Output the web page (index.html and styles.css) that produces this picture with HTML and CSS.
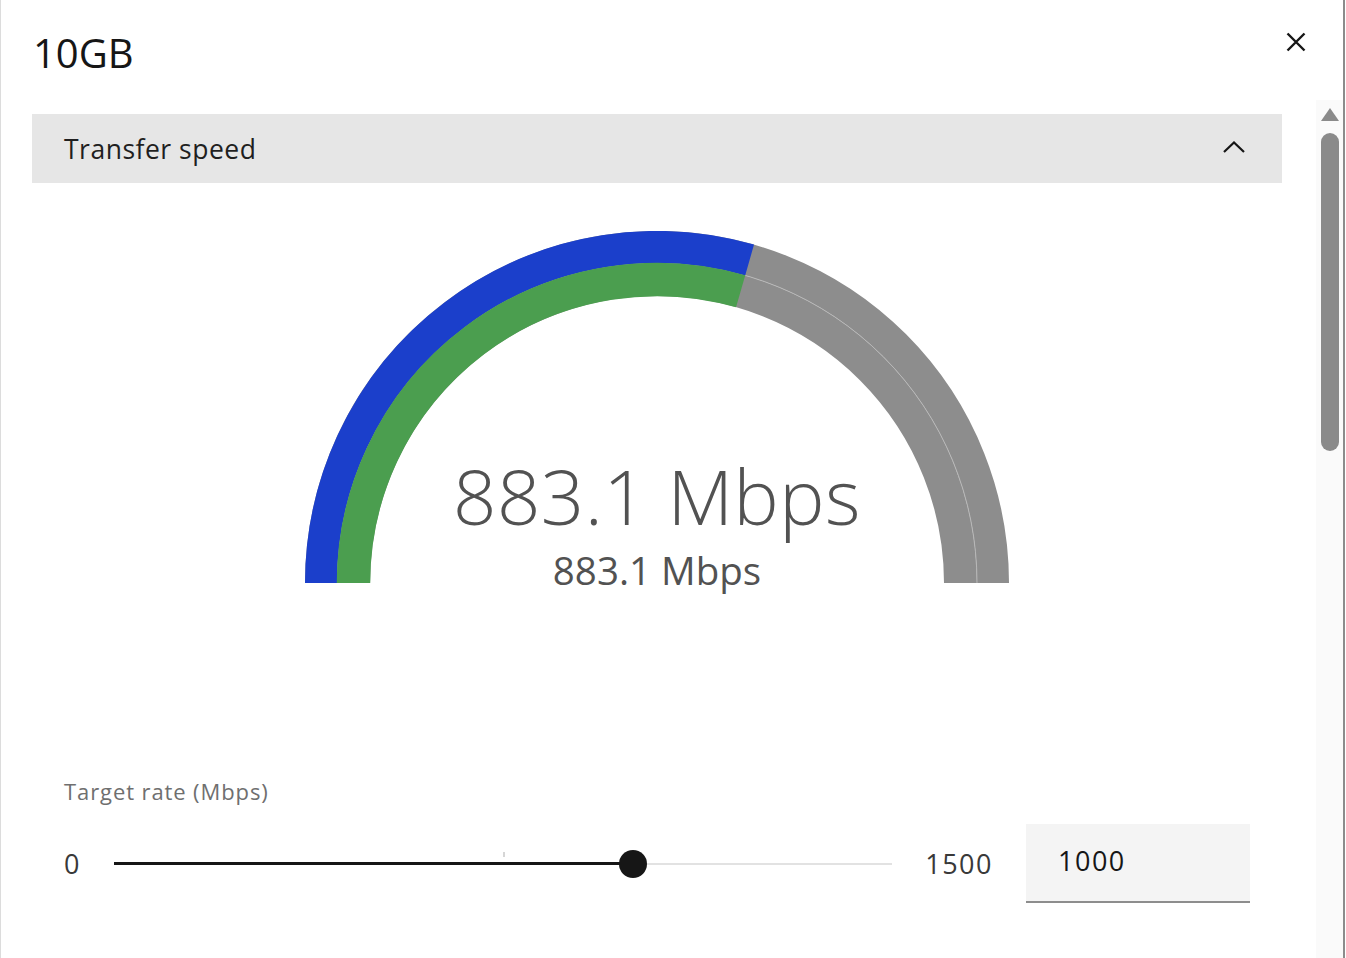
FILE: index.html
```html
<!DOCTYPE html>
<html lang="en">
<head>
<meta charset="utf-8">
<title>10GB</title>
<link rel="stylesheet" href="styles.css">
</head>
<body>
<div class="modal">
  <div class="modal-header">
    <h1 class="title">10GB</h1>
    <button class="close" aria-label="Close">
      <svg width="20" height="20" viewBox="0 0 20 20"><path d="M1.5 1.5 L18.5 18.5 M18.5 1.5 L1.5 18.5" stroke="#161616" stroke-width="2.4" fill="none"/></svg>
    </button>
  </div>
  <div class="modal-body">
    <div class="content">
      <div class="accordion-head">
        <span class="accordion-title">Transfer speed</span>
        <svg class="chevron" width="22" height="12" viewBox="0 0 22 12"><path d="M1 11 L11 1.5 L21 11" stroke="#161616" stroke-width="2.2" fill="none"/></svg>
      </div>
      <div class="gauge">
        <svg class="gauge-svg" width="704" height="360" viewBox="0 0 704 360">
          <path d="M16 352 A336 336 0 0 1 688 352" stroke="#8d8d8d" stroke-width="32" fill="none"/>
          <path d="M48.5 352 A303.5 303.5 0 0 1 655.5 352" stroke="#8d8d8d" stroke-width="33" fill="none"/>
          <path d="M32 352 A320 320 0 0 1 672 352" stroke="#b8b8b8" stroke-width="1" fill="none"/>
          <path d="M16 352 A336 336 0 0 1 444.6 29.0" stroke="#1b3fcb" stroke-width="32" fill="none"/>
          <path d="M48.5 352 A303.5 303.5 0 0 1 435.65 60.25" stroke="#4b9e4f" stroke-width="33.5" fill="none"/>
        </svg>
        <div class="readout">
          <div class="readout-main">883.1 Mbps</div>
          <div class="readout-sub">883.1 Mbps</div>
        </div>
      </div>
      <div class="rate">
        <div class="rate-label">Target rate (Mbps)</div>
        <div class="slider-row">
          <span class="range-label">0</span>
          <div class="slider">
            <div class="track-active" style="width: 66.67%"></div>
            <div class="thumb"></div>
            <div class="track-rest"></div>
            <div class="tick"></div>
          </div>
          <span class="range-label">1500</span>
          <div class="number-input">1000</div>
        </div>
      </div>
    </div>
    <div class="scrollbar">
      <div class="scroll-arrow"></div>
      <div class="scroll-thumb"></div>
    </div>
  </div>
</div>
</body>
</html>
```
FILE: styles.css
```css
* { box-sizing: border-box; }
html, body { margin: 0; padding: 0; background: #ffffff; }
body {
  font-family: "Open Sans", "Noto Sans", sans-serif;
  color: #161616;
  width: 1346px;
  height: 958px;
  overflow: hidden;
}
.modal {
  width: 1345px;
  height: 958px;
  border-left: 1px solid #dcdcdc;
  border-right: 2px solid #8c8c8c;
  display: flex;
  flex-direction: column;
  background: #fff;
}
.modal-header {
  height: 100px;
  display: flex;
  justify-content: space-between;
  align-items: flex-start;
  padding-left: 32px;
  padding-right: 37px;
}
.title {
  margin: 0;
  margin-top: 28px;
  font-size: 40px;
  font-weight: 400;
  line-height: 50px;
  color: #161616;
}
.close {
  border: 0;
  background: none;
  padding: 0;
  margin-top: 32px;
  width: 20px;
  height: 20px;
  display: block;
}
.close svg { display: block; }
.modal-body {
  flex: 1;
  display: flex;
  min-height: 0;
}
.content {
  flex: 1;
  padding-left: 31px;
  padding-right: 34px;
  padding-top: 14px;
}
.accordion-head {
  height: 69px;
  background: #e6e6e6;
  display: flex;
  align-items: center;
  justify-content: space-between;
  padding-left: 32px;
  padding-right: 37px;
}
.accordion-title {
  font-size: 26.5px;
  line-height: 30px;
  letter-spacing: 0.5px;
  color: #1f1f1f;
}
.chevron { display: block; margin-top: -4px; }
.gauge {
  margin-top: 48px;
  display: grid;
  justify-items: center;
}
.gauge-svg { grid-area: 1 / 1; display: block; }
.readout {
  grid-area: 1 / 1;
  align-self: end;
  text-align: center;
  color: #525252;
  margin-bottom: -4px;
}
.readout-main {
  font-size: 76px;
  font-weight: 300;
  line-height: 80px;
  letter-spacing: 0.5px;
}
.readout-sub {
  font-size: 38.5px;
  font-weight: 400;
  line-height: 50px;
  margin-top: 9px;
}
.rate {
  margin-top: 186px;
  padding-left: 32px;
  padding-right: 32px;
}
.rate-label {
  font-size: 22px;
  line-height: 28px;
  letter-spacing: 0.9px;
  color: #6f6f6f;
}
.slider-row {
  margin-top: 19px;
  display: flex;
  align-items: center;
  gap: 33px;
}
.range-label {
  font-size: 27px;
  letter-spacing: 1.5px;
  color: #393939;
  line-height: 30px;
}
.slider {
  flex: 1;
  height: 30px;
  display: flex;
  align-items: center;
  position: relative;
}
.track-active {
  height: 3px;
  background: #161616;
}
.thumb {
  width: 28px;
  height: 28px;
  border-radius: 50%;
  background: #161616;
  margin-left: -14px;
  margin-right: -14px;
  position: relative;
  z-index: 1;
}
.track-rest {
  flex: 1;
  height: 2px;
  background: #e2e2e2;
}
.tick {
  position: absolute;
  left: 50%;
  top: 3px;
  width: 2px;
  height: 5px;
  background: #d6d6d6;
}
.number-input {
  width: 224px;
  height: 79px;
  background: #f4f4f4;
  border-bottom: 2px solid #8d8d8d;
  padding-left: 32px;
  display: flex;
  align-items: center;
  font-size: 27px;
  letter-spacing: 1.5px;
  color: #161616;
  padding-bottom: 4px;
}
.scrollbar {
  width: 27px;
  background: #fafafa;
  display: flex;
  flex-direction: column;
  align-items: center;
  padding-top: 8px;
  margin-right: 0;
}
.scroll-arrow {
  width: 0;
  height: 0;
  border-left: 9px solid transparent;
  border-right: 9px solid transparent;
  border-bottom: 13px solid #8a8a8a;
}
.scroll-thumb {
  margin-top: 12px;
  width: 18px;
  height: 318px;
  border-radius: 9px;
  background: #8a8a8a;
}
```
